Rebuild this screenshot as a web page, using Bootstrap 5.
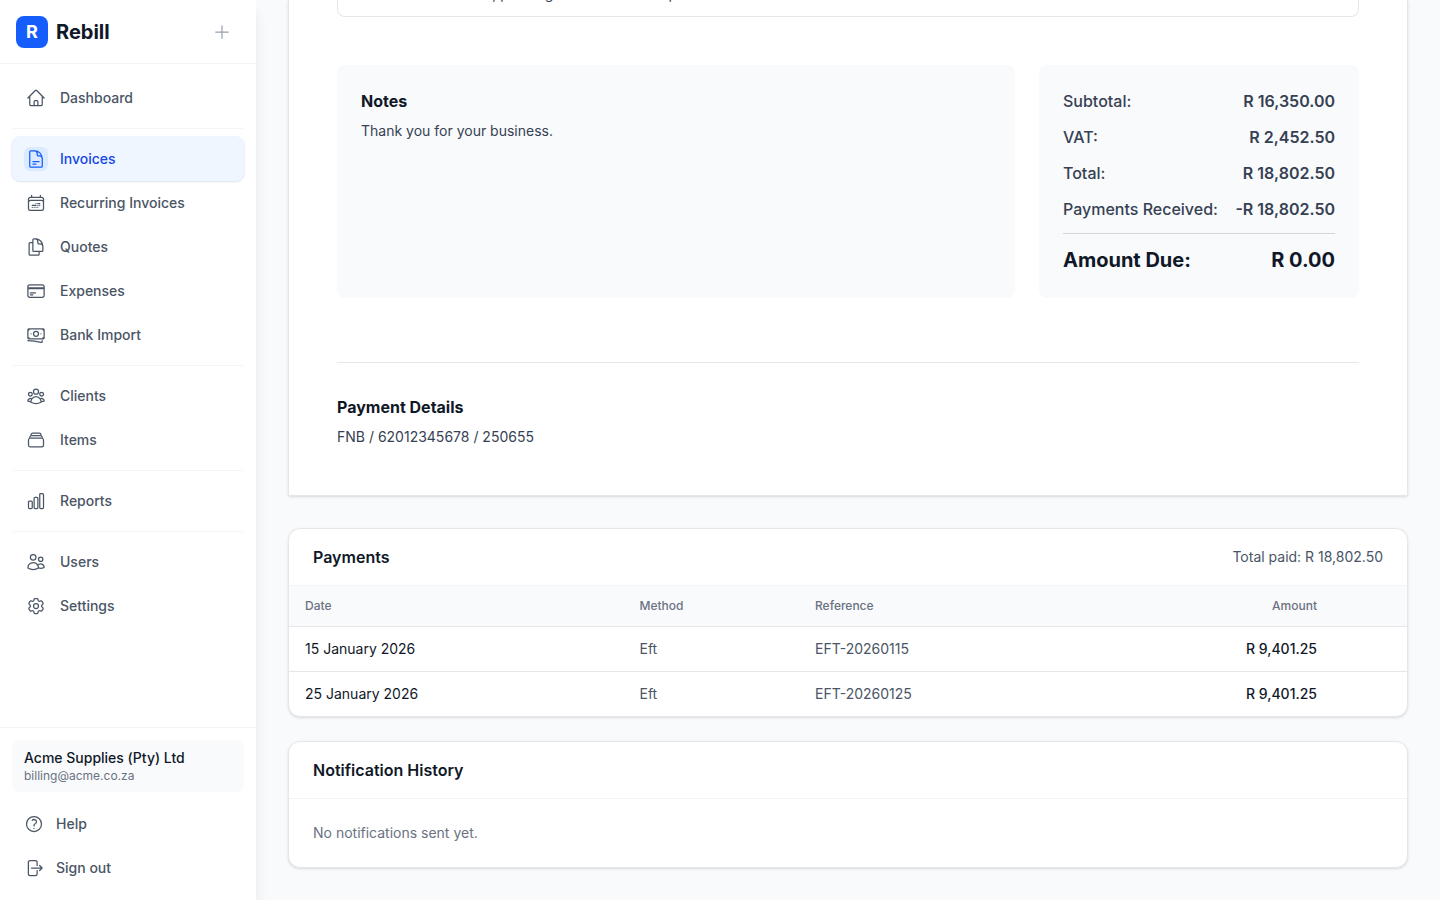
<!DOCTYPE html>
<html lang="en">
<head>
<meta charset="utf-8">
<meta name="viewport" content="width=device-width, initial-scale=1">
<title>Rebill – Invoices</title>
<link href="https://cdn.jsdelivr.net/npm/bootstrap@5.3.0/dist/css/bootstrap.min.css" rel="stylesheet">
<style>
  :root { --line: #e5e7eb; --soft: #f3f4f6; --bg: #f9fafb; }
  body { font-family: Inter, "Liberation Sans", sans-serif; font-size: 14px; line-height: 20px; color: #364153; background: var(--bg); height: 100vh; overflow: hidden; }
  h2 { font-size: 16px; line-height: 24px; font-weight: 600; color: #101828; margin: 0; }
  svg { fill: none; stroke: currentColor; stroke-width: 1.5; stroke-linecap: round; stroke-linejoin: round; width: 20px; height: 20px; flex: none; }
  .sidebar { width: 256px; background: #fff; z-index: 2; box-shadow: 0 10px 15px -3px rgba(0,0,0,.1), 0 4px 6px -4px rgba(0,0,0,.1); }
  .brand-row { height: 64px; border-bottom: 1px solid var(--soft); padding: 0 24px 0 16px; }
  .brand-row svg { color: #99a1af; }
  .logo { width: 32px; height: 32px; border-radius: 8px; background: #155dfc; color: #fff; font-size: 18px; font-weight: 700; }
  .brand-name { font-size: 20px; font-weight: 700; color: #101828; }
  .side-nav { padding: 12px; }
  .side-link { height: 44px; padding: 0 12px; gap: 12px; border-radius: 8px; color: #4a5565; font-weight: 500; text-decoration: none; }
  .side-link .ico { width: 24px; height: 24px; border-radius: 6px; }
  .side-link.active { background: #eff6ff; color: #1447e6; box-shadow: 0 1px 2px rgba(0,0,0,.08), 0 0 1px 1px rgba(219,234,254,.45); }
  .side-link.active .ico { background: #dbeafe; }
  .side-link.active svg { color: #155dfc; }
  .foot-link { height: 40px; }
  .divider { height: 1px; background: var(--soft); margin: 8px 1px; }
  .side-foot { border-top: 1px solid var(--soft); padding: 12px; }
  .account { background: var(--bg); border-radius: 8px; padding: 8px 12px; margin-bottom: 12px; }
  .account-mail { font-size: 12px; line-height: 16px; color: #6a7282; }
  .main-pane { padding: 0 32px 32px; min-width: 0; }
  .sheet, .panel { background: #fff; border: 1px solid var(--line); box-shadow: 0 1px 3px rgba(0,0,0,.1), 0 1px 2px -1px rgba(0,0,0,.1); }
  .sheet { border-top: 0; padding: 0 48px 48px; margin-bottom: 32px; }
  .panel { border-radius: 12px; overflow: hidden; }
  .panel-head { padding: 16px 24px; border-bottom: 1px solid var(--soft); }
  .lines { height: 17px; border: 1px solid var(--line); border-top: 0; border-radius: 0 0 8px 8px; padding: 0 24px 12px 34px; overflow: hidden; margin-bottom: 48px; }
  .tile { background: var(--bg); border-radius: 8px; padding: 24px; }
  .tile h2, .details h2 { font-weight: 700; }
  .totals { width: 320px; font-size: 16px; line-height: 24px; font-weight: 500; gap: 12px; }
  .amt { font-weight: 600; }
  .due { border-top: 1px solid #d1d5dc; padding-top: 12px; font-size: 20px; line-height: 28px; font-weight: 700; color: #101828; }
  .details { border-top: 1px solid var(--line); margin-top: 64px; padding-top: 32px; }
  .pay { width: 100%; table-layout: fixed; border-collapse: separate; border-spacing: 0; color: #4a5565; }
  .pay th { font-size: 12px; line-height: 16px; font-weight: 500; color: #6a7282; background: var(--bg); padding: 12px 16px; border-bottom: 1px solid var(--line); }
  .pay td { padding: 12px 16px; }
  .pay tr + tr td { border-top: 1px solid var(--line); }
  .ink { color: #101828; }
  .mid { font-weight: 500; }
  .slate { color: #4a5565; }
  .dim { color: #6a7282; }
  .c-date { width: 334.5px; } .c-method { width: 175.5px; } .c-ref { width: 310px; } .c-amt { width: 224px; }
</style>
</head>
<body class="d-flex">
<aside class="sidebar d-flex flex-column flex-shrink-0 vh-100">
  <div class="brand-row d-flex align-items-center">
    <span class="logo d-flex align-items-center justify-content-center me-2">R</span>
    <span class="brand-name">Rebill</span>
    <svg class="ms-auto" viewBox="0 0 24 24"><path d="M12 4.5v15m7.5-7.5h-15"/></svg>
  </div>
  <nav class="side-nav flex-grow-1">
    <a href="#" class="side-link d-flex align-items-center"><span class="ico d-flex align-items-center justify-content-center"><svg viewBox="0 0 24 24"><path d="m2.25 12 8.954-8.955c.44-.439 1.152-.439 1.591 0L21.75 12M4.5 9.75v10.125c0 .621.504 1.125 1.125 1.125H9.75v-4.875c0-.621.504-1.125 1.125-1.125h2.25c.621 0 1.125.504 1.125 1.125V21h4.125c.621 0 1.125-.504 1.125-1.125V9.75M8.25 21h8.25"/></svg></span>Dashboard</a>
    <div class="divider"></div>
    <a href="#" class="side-link active d-flex align-items-center"><span class="ico d-flex align-items-center justify-content-center"><svg viewBox="0 0 24 24"><path d="M19.5 14.25v-2.625a3.375 3.375 0 0 0-3.375-3.375h-1.5A1.125 1.125 0 0 1 13.5 7.125v-1.5a3.375 3.375 0 0 0-3.375-3.375H8.25m0 12.75h7.5m-7.5 3H12M10.5 2.25H5.625c-.621 0-1.125.504-1.125 1.125v17.25c0 .621.504 1.125 1.125 1.125h12.75c.621 0 1.125-.504 1.125-1.125V11.25a9 9 0 0 0-9-9Z"/></svg></span>Invoices</a>
    <a href="#" class="side-link d-flex align-items-center"><span class="ico d-flex align-items-center justify-content-center"><svg viewBox="0 0 24 24"><path d="M6.75 2.994v2.25m10.5-2.25v2.25m-14.252 13.5V7.491a2.25 2.25 0 0 1 2.25-2.25h13.5a2.25 2.25 0 0 1 2.25 2.25v11.251m-18 0a2.25 2.25 0 0 0 2.25 2.25h13.5a2.25 2.25 0 0 0 2.25-2.25m-18 0v-7.5a2.25 2.25 0 0 1 2.25-2.25h13.5a2.25 2.25 0 0 1 2.25 2.25v7.5m-6.75-6h2.25m-9 2.25h4.5m.002-2.25h.005v.006H12v-.006Zm-.001 4.5h.006v.006h-.006v-.005Zm-2.25.001h.005v.006H9.75v-.006Zm-2.25 0h.005v.005h-.006v-.005Zm6.75-2.247h.005v.005h-.005v-.005Zm0 2.247h.006v.006h-.006v-.006Zm2.25-2.248h.006V15H16.5v-.005Z"/></svg></span>Recurring Invoices</a>
    <a href="#" class="side-link d-flex align-items-center"><span class="ico d-flex align-items-center justify-content-center"><svg viewBox="0 0 24 24"><path d="M15.75 17.25v3.375c0 .621-.504 1.125-1.125 1.125h-9.75a1.125 1.125 0 0 1-1.125-1.125V7.875c0-.621.504-1.125 1.125-1.125H6.75a9.06 9.06 0 0 1 1.5.124m7.5 10.376h3.375c.621 0 1.125-.504 1.125-1.125V11.25c0-4.46-3.243-8.161-7.5-8.876a9.06 9.06 0 0 0-1.5-.124H9.375c-.621 0-1.125.504-1.125 1.125v3.5m7.5 10.375H9.375a1.125 1.125 0 0 1-1.125-1.125v-9.25m12 6.625v-1.875a3.375 3.375 0 0 0-3.375-3.375h-1.5a1.125 1.125 0 0 1-1.125-1.125v-1.5a3.375 3.375 0 0 0-3.375-3.375H9.75"/></svg></span>Quotes</a>
    <a href="#" class="side-link d-flex align-items-center"><span class="ico d-flex align-items-center justify-content-center"><svg viewBox="0 0 24 24"><path d="M2.25 8.25h19.5M2.25 9h19.5m-16.5 5.25h6m-6 2.25h3m-3.75 3h15a2.25 2.25 0 0 0 2.25-2.25V6.75A2.25 2.25 0 0 0 19.5 4.5h-15a2.25 2.25 0 0 0-2.25 2.25v10.5A2.25 2.25 0 0 0 4.5 19.5Z"/></svg></span>Expenses</a>
    <a href="#" class="side-link d-flex align-items-center"><span class="ico d-flex align-items-center justify-content-center"><svg viewBox="0 0 24 24"><path d="M2.25 18.75a60.07 60.07 0 0 1 15.797 2.101c.727.198 1.453-.342 1.453-1.096V18.75M3.75 4.5v.75A.75.75 0 0 1 3 6h-.75m0 0v-.375c0-.621.504-1.125 1.125-1.125H20.25M2.25 6v9m18-10.5v.75c0 .414.336.75.75.75h.75m-1.5-1.5h.375c.621 0 1.125.504 1.125 1.125v9.75c0 .621-.504 1.125-1.125 1.125h-.375m1.5-1.5H21a.75.75 0 0 0-.75.75v.75m0 0H3.75m0 0h-.375a1.125 1.125 0 0 1-1.125-1.125V15m1.5 1.5v-.75A.75.75 0 0 0 3 15h-.75M15 10.5a3 3 0 1 1-6 0 3 3 0 0 1 6 0Zm3 0h.008v.008H18V10.5Zm-12 0h.008v.008H6V10.5Z"/></svg></span>Bank Import</a>
    <div class="divider"></div>
    <a href="#" class="side-link d-flex align-items-center"><span class="ico d-flex align-items-center justify-content-center"><svg viewBox="0 0 24 24"><path d="M18 18.72a9.094 9.094 0 0 0 3.741-.479 3 3 0 0 0-4.682-2.72m.94 3.198.001.031c0 .225-.012.447-.037.666A11.944 11.944 0 0 1 12 21c-2.17 0-4.207-.576-5.963-1.584A6.062 6.062 0 0 1 6 18.719m12 0a5.971 5.971 0 0 0-.941-3.197m0 0A5.995 5.995 0 0 0 12 12.75a5.995 5.995 0 0 0-5.058 2.772m0 0a3 3 0 0 0-4.681 2.72 8.986 8.986 0 0 0 3.74.477m.94-3.197a5.971 5.971 0 0 0-.94 3.197M15 6.75a3 3 0 1 1-6 0 3 3 0 0 1 6 0Zm6 3a2.25 2.25 0 1 1-4.5 0 2.25 2.25 0 0 1 4.5 0Zm-13.5 0a2.25 2.25 0 1 1-4.5 0 2.25 2.25 0 0 1 4.5 0Z"/></svg></span>Clients</a>
    <a href="#" class="side-link d-flex align-items-center"><span class="ico d-flex align-items-center justify-content-center"><svg viewBox="0 0 24 24"><path d="M6 6.878V6a2.25 2.25 0 0 1 2.25-2.25h7.5A2.25 2.25 0 0 1 18 6v.878m-12 0c.235-.083.487-.128.75-.128h10.5c.263 0 .515.045.75.128m-12 0A2.25 2.25 0 0 0 4.5 9v.878m13.5-3A2.25 2.25 0 0 1 19.5 9v.878m0 0a2.246 2.246 0 0 0-.75-.128H5.25c-.263 0-.515.045-.75.128m15 0A2.25 2.25 0 0 1 21 12v6a2.25 2.25 0 0 1-2.25 2.25H5.25A2.25 2.25 0 0 1 3 18v-6c0-.98.626-1.813 1.5-2.122"/></svg></span>Items</a>
    <div class="divider"></div>
    <a href="#" class="side-link d-flex align-items-center"><span class="ico d-flex align-items-center justify-content-center"><svg viewBox="0 0 24 24"><path d="M3 13.125C3 12.504 3.504 12 4.125 12h2.25c.621 0 1.125.504 1.125 1.125v6.75C7.5 20.496 6.996 21 6.375 21h-2.25A1.125 1.125 0 0 1 3 19.875v-6.75ZM9.75 8.625c0-.621.504-1.125 1.125-1.125h2.25c.621 0 1.125.504 1.125 1.125v11.25c0 .621-.504 1.125-1.125 1.125h-2.25a1.125 1.125 0 0 1-1.125-1.125V8.625ZM16.5 4.125c0-.621.504-1.125 1.125-1.125h2.25C20.496 3 21 3.504 21 4.125v15.75c0 .621-.504 1.125-1.125 1.125h-2.25a1.125 1.125 0 0 1-1.125-1.125V4.125Z"/></svg></span>Reports</a>
    <div class="divider"></div>
    <a href="#" class="side-link d-flex align-items-center"><span class="ico d-flex align-items-center justify-content-center"><svg viewBox="0 0 24 24"><path d="M15 19.128a9.38 9.38 0 0 0 2.625.372 9.337 9.337 0 0 0 4.121-.952 4.125 4.125 0 0 0-7.533-2.493M15 19.128v-.003c0-1.113-.285-2.16-.786-3.07M15 19.128v.106A12.318 12.318 0 0 1 8.624 21c-2.331 0-4.512-.645-6.374-1.766l-.001-.109a6.375 6.375 0 0 1 11.964-3.07M12 6.375a3.375 3.375 0 1 1-6.75 0 3.375 3.375 0 0 1 6.75 0Zm8.25 2.25a2.625 2.625 0 1 1-5.25 0 2.625 2.625 0 0 1 5.25 0Z"/></svg></span>Users</a>
    <a href="#" class="side-link d-flex align-items-center"><span class="ico d-flex align-items-center justify-content-center"><svg viewBox="0 0 24 24"><path d="M9.594 3.94c.09-.542.56-.94 1.11-.94h2.593c.55 0 1.02.398 1.11.94l.213 1.281c.063.374.313.686.645.87.074.04.147.083.22.127.325.196.72.257 1.075.124l1.217-.456a1.125 1.125 0 0 1 1.37.49l1.296 2.247a1.125 1.125 0 0 1-.26 1.431l-1.003.827c-.293.241-.438.613-.43.992a7.723 7.723 0 0 1 0 .255c-.008.378.137.75.43.991l1.004.827c.424.35.534.955.26 1.43l-1.298 2.247a1.125 1.125 0 0 1-1.369.491l-1.217-.456c-.355-.133-.75-.072-1.076.124a6.47 6.47 0 0 1-.22.128c-.331.183-.581.495-.644.869l-.213 1.281c-.09.543-.56.94-1.11.94h-2.594c-.55 0-1.019-.398-1.11-.94l-.213-1.281c-.062-.374-.312-.686-.644-.87a6.52 6.52 0 0 1-.22-.127c-.325-.196-.72-.257-1.076-.124l-1.217.456a1.125 1.125 0 0 1-1.369-.49l-1.297-2.247a1.125 1.125 0 0 1 .26-1.431l1.004-.827c.292-.24.437-.613.43-.991a6.932 6.932 0 0 1 0-.255c.007-.38-.138-.751-.43-.992l-1.004-.827a1.125 1.125 0 0 1-.26-1.43l1.297-2.247a1.125 1.125 0 0 1 1.37-.491l1.216.456c.356.133.751.072 1.076-.124.072-.044.146-.086.22-.128.332-.183.582-.495.644-.869l.214-1.28Z"/><path d="M15 12a3 3 0 1 1-6 0 3 3 0 0 1 6 0Z"/></svg></span>Settings</a>
  </nav>
  <div class="side-foot">
    <div class="account">
      <div class="ink mid">Acme Supplies (Pty) Ltd</div>
      <div class="account-mail">billing@acme.co.za</div>
    </div>
    <a href="#" class="side-link foot-link d-flex align-items-center mb-1"><svg viewBox="0 0 24 24"><path d="M9.879 7.519c1.171-1.025 3.071-1.025 4.242 0 1.172 1.025 1.172 2.687 0 3.712-.203.179-.43.326-.67.442-.745.361-1.45.999-1.45 1.827v.75M21 12a9 9 0 1 1-18 0 9 9 0 0 1 18 0Zm-9 5.25h.008v.008H12v-.008Z"/></svg>Help</a>
    <a href="#" class="side-link foot-link d-flex align-items-center"><svg viewBox="0 0 24 24"><path d="M15.75 9V5.25A2.25 2.25 0 0 0 13.5 3h-6a2.25 2.25 0 0 0-2.25 2.25v13.5A2.25 2.25 0 0 0 7.5 21h6a2.25 2.25 0 0 0 2.25-2.25V15m3 0 3-3m0 0-3-3m3 3H9"/></svg>Sign out</a>
  </div>
</aside>
<main class="main-pane flex-grow-1">
  <section class="sheet">
    <div class="lines d-flex align-items-end"><span>Interior alterations, painting and final clean-up</span></div>
    <div class="d-flex gap-4">
      <div class="tile flex-grow-1"><h2 class="mb-2">Notes</h2><div>Thank you for your business.</div></div>
      <div class="tile totals d-flex flex-column">
        <div class="d-flex justify-content-between"><span>Subtotal:</span><span class="amt">R 16,350.00</span></div>
        <div class="d-flex justify-content-between"><span>VAT:</span><span class="amt">R 2,452.50</span></div>
        <div class="d-flex justify-content-between"><span>Total:</span><span class="amt">R 18,802.50</span></div>
        <div class="d-flex justify-content-between"><span>Payments Received:</span><span class="amt">-R 18,802.50</span></div>
        <div class="due d-flex justify-content-between"><span>Amount Due:</span><span>R 0.00</span></div>
      </div>
    </div>
    <div class="details"><h2 class="mb-2">Payment Details</h2><div>FNB / 62012345678 / 250655</div></div>
  </section>
  <section class="panel mb-4">
    <div class="panel-head d-flex justify-content-between align-items-center"><h2>Payments</h2><span class="slate">Total paid: R 18,802.50</span></div>
    <table class="pay">
      <colgroup><col class="c-date"><col class="c-method"><col class="c-ref"><col class="c-amt"><col></colgroup>
      <thead><tr><th>Date</th><th>Method</th><th>Reference</th><th class="text-end">Amount</th><th></th></tr></thead>
      <tbody>
        <tr><td class="ink">15 January 2026</td><td>Eft</td><td>EFT-20260115</td><td class="text-end ink mid">R 9,401.25</td><td></td></tr>
        <tr><td class="ink">25 January 2026</td><td>Eft</td><td>EFT-20260125</td><td class="text-end ink mid">R 9,401.25</td><td></td></tr>
      </tbody>
    </table>
  </section>
  <section class="panel">
    <div class="panel-head"><h2>Notification History</h2></div>
    <div class="p-4 dim">No notifications sent yet.</div>
  </section>
</main>
<script src="https://cdn.jsdelivr.net/npm/bootstrap@5.3.0/dist/js/bootstrap.bundle.min.js"></script>
</body>
</html>
